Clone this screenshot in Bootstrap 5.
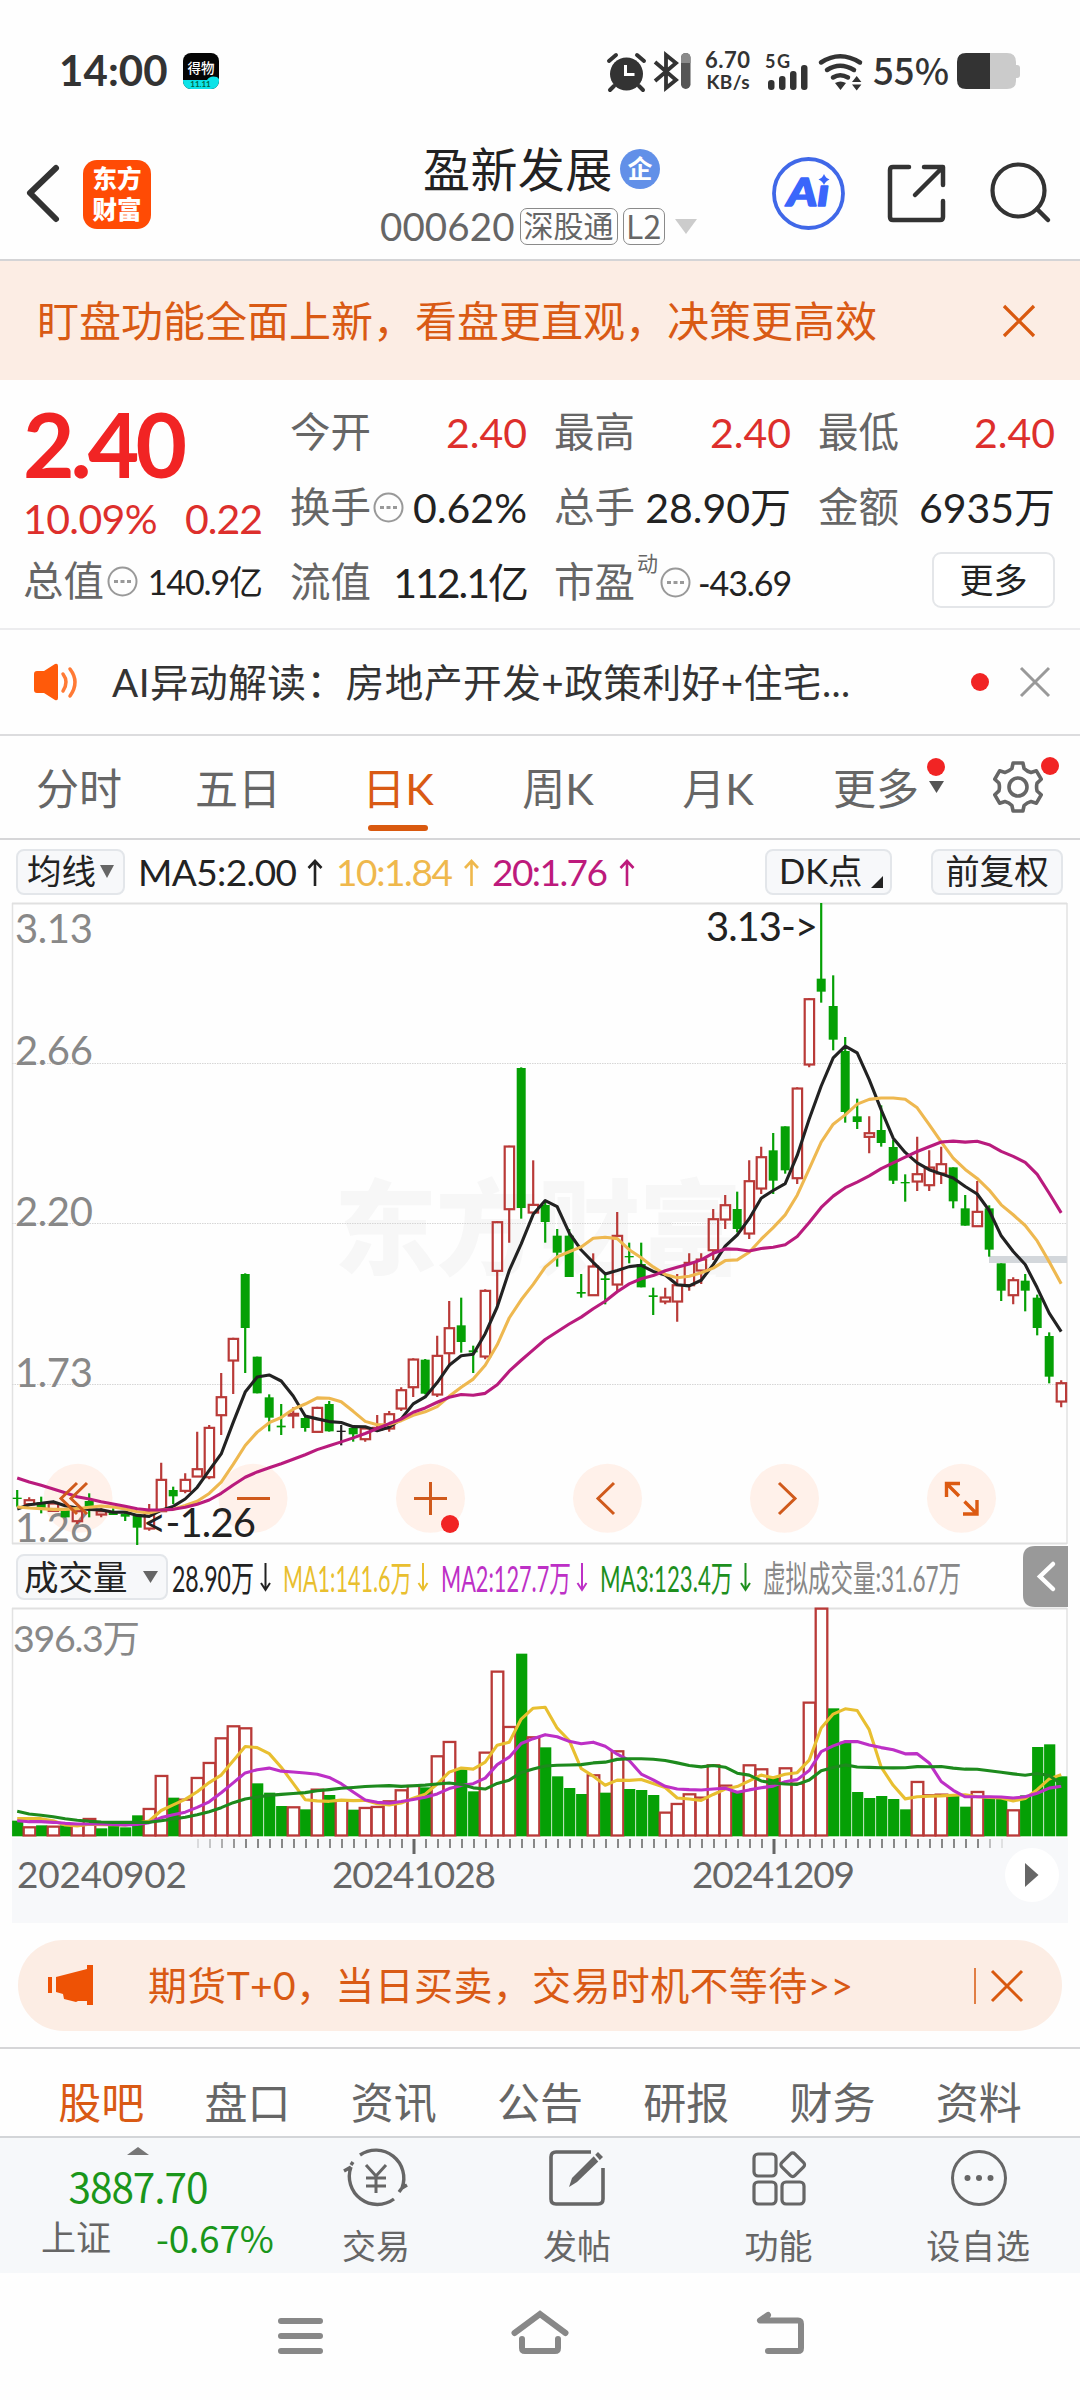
<!DOCTYPE html>
<html lang="zh-CN">
<head>
<meta charset="utf-8">
<meta name="viewport" content="width=device-width, initial-scale=1">
<title>盈新发展 000620</title>
<link href="https://cdn.jsdelivr.net/npm/bootstrap@5.3.0/dist/css/bootstrap.min.css" rel="stylesheet">
<style>
body{width:1080px;height:2400px;margin:0;background:#fefefe;color:#222;font-family:Lato,"Noto Sans CJK SC",sans-serif;line-height:1;overflow-x:hidden}
svg{display:block;flex:none;overflow:visible}
.nw,.nw *{white-space:nowrap}
.orange{color:#d95a14}.grey6{color:#666}.down{color:#1a961a}
.statusbar{height:142px;padding-left:59px}
.clock{font-size:42px;font-weight:700;color:#333;width:124px;letter-spacing:.1px;margin-top:-2px}
.apphead{height:119px;border-bottom:2px solid #d4d4d6}
.brand{width:68px;height:69px;border-radius:14px;background:#ff4b05;color:#fff;font-size:24.5px;font-weight:900;line-height:31px;padding-top:3px;text-align:center}
.stockname{font-size:47px;color:#222;letter-spacing:.4px}
.code{font-size:38.5px;color:#666;letter-spacing:.1px}
.tagbox{height:37px;border:1.5px solid #8a8a8a;border-radius:7px;color:#666;font-size:30px;line-height:32px;padding:0 3px}
.notice{height:119px;background:#fcede4;font-size:42px;padding-left:37px}
.quote{height:250px;border-bottom:2px solid #ececee;padding-left:23px}
.bigprice{font-size:89px;font-weight:700;color:#f12424;letter-spacing:-4px;line-height:100px;height:100px}
.cell{height:75px}
.lab{font-size:40.5px;color:#666}
.num{font-size:41px;color:#222}
.numsm{font-size:34px;color:#222}
.up{color:#dd2f2c}
.morebtn{width:123px;height:56px;border:2px solid #e4e6e9;border-radius:9px;font-size:34px;background:#fff}
.airow{height:106px;border-bottom:2px solid #dcdcde;padding-left:33px;font-size:38.7px;color:#333}
.tabs{height:104px;border-bottom:2px solid #d6d6d8;font-size:43px;color:#666}
.tabs>div{height:102px;position:relative;padding-top:3px}
.tabline{position:absolute;width:60px;height:6px;border-radius:3px;background:#d9590f;bottom:7px;left:50%;margin-left:-30px}
.dot{width:18px;height:18px;border-radius:50%;background:#f12424}
.corner{position:absolute}
.tools{height:63px;padding-left:16px;font-size:37px}
.chip{background:#f7f8fa;border:2px solid #e3e6ea;border-radius:8px;height:46px;font-size:34.5px;color:#222}
.promo{margin:17px 18px 16px;height:91px;border-radius:46px;background:#fcede4;font-size:39px}
.sections{height:91px;border-top:2px solid #d6d6d8;border-bottom:2px solid #d3d5d8;font-size:43px;color:#666;padding:19px 28px 0}
.bottombar{height:135px;background:#f6f8fa;color:#666;font-size:34px}
.idx{width:276px}
.idx .pt{font-family:"Noto Sans CJK SC",sans-serif}
.navbar3{height:126px}
</style>
</head>
<body class="nw">
<header class="statusbar d-flex align-items-center">
  <div class="clock">14:00</div>
  <svg width="36" height="36" viewBox="0 0 36 36"><defs><clipPath id="ic"><rect width="36" height="36" rx="8"/></clipPath></defs><g clip-path="url(#ic)"><rect width="36" height="36" fill="#050505"/><path d="M0 27H24Q27 22 34 24L36 26V36H0Z" fill="#0de3e8"/></g><text x="18" y="20" font-size="13.5" font-weight="500" fill="#fff" text-anchor="middle">得物</text><text x="17.500" y="34" font-size="8" font-weight="700" fill="#064" text-anchor="middle">11.11</text></svg>
  <svg class="ms-auto" width="480" height="50" viewBox="600 46 480 50" fill="#333">
    <circle cx="626.500" cy="74" r="16.500"/><path d="M614 86l-4 4M639 86l4 4M609 61l7-6M644 61l-7-6" stroke="#333" stroke-width="4" stroke-linecap="round"/><path d="M625.500 65v9.500h9" fill="none" stroke="#fff" stroke-width="3"/>
    <path d="M655 62l21 18-10 8V55l10 8-21 18" fill="none" stroke="#333" stroke-width="3.800"/>
    <rect x="681" y="53" width="9.500" height="36" rx="4.700" fill="#555"/><path d="M681 63V57.700a4.700 4.700 0 0 1 9.500 0V63Z" fill="#8a8a8a"/>
    <text x="705" y="68" font-size="22" font-weight="700" textLength="45">6.70</text><text x="706.500" y="89" font-size="19" font-weight="700" textLength="43">KB/s</text>
    <text x="765" y="67.500" font-size="18" font-weight="700" textLength="25">5G</text>
    <rect x="768" y="80" width="6.500" height="10" rx="3"/><rect x="779" y="76" width="6.500" height="14" rx="3"/><rect x="790" y="71" width="6.500" height="19" rx="3"/><rect x="801" y="65" width="6.500" height="25" rx="3"/>
    <g fill="none" stroke="#333" stroke-width="4.500" stroke-linecap="round"><path d="M821 62.500Q840 50 860 62.500"/><path d="M827 70Q840 61.500 854 70"/><path d="M833 77.500Q840 73 848 77.500"/></g>
    <path d="M835 83Q840.500 80 846 83L840.500 90ZM852 82l4.700-6 4.700 6ZM852 84.500l4.700 6 4.700-6Z"/>
    <text x="873" y="84.500" font-size="37" font-weight="500" font-family="Noto Sans CJK SC" textLength="76" lengthAdjust="spacingAndGlyphs">55%</text>
    <path d="M990 53h17q9 0 9 9v3h1q3 0 3 3v7q0 3-3 3h-1v3q0 8-9 8h-17z" fill="#cbcbcb"/><path d="M990 53H966q-9 0-9 9v18q0 9 9 9H990z"/>
  </svg>
</header>
<section class="apphead d-flex">
  <svg style="margin:21px 0 0 24px" width="38" height="60" viewBox="0 0 38 60"><path d="M32 5L6 30L32 56" fill="none" stroke="#333" stroke-width="6" stroke-linecap="round" stroke-linejoin="round"/></svg>
  <div class="brand" style="margin:18px 0 0 21px">东方<br>财富</div>
  <div style="margin-left:229px;width:322px">
    <div class="d-flex align-items-center" style="margin:2px 0 0 43px;height:50px"><span class="stockname">盈新发展</span>
      <svg style="margin-left:7px" width="40" height="40" viewBox="0 0 40 40"><circle cx="20" cy="20" r="20" fill="#6290e8"/><text x="20" y="29" font-size="25" font-weight="700" fill="#fff" text-anchor="middle">企</text></svg></div>
    <div class="d-flex align-items-center" style="margin-top:14px;height:37px"><span class="code">000620</span><span class="tagbox" style="margin-left:5px">深股通</span><span class="tagbox text-center" style="margin-left:5px;padding:0;width:42px"><span style="font-size:32px;font-family:'Noto Sans CJK SC'">L2</span></span>
      <svg style="margin:0 0 0 10px" width="22" height="15"><path d="M0 0H22L11 15Z" fill="#ccc"/></svg></div>
  </div>
  <svg class="ms-auto" width="316" height="100" viewBox="764 142 316 100" fill="none" stroke="#333" stroke-width="5" stroke-linecap="round" stroke-linejoin="round">
    <circle cx="808.500" cy="193.500" r="34.500" stroke="#4068e8" stroke-width="3.800"/>
    <text x="787" y="206" font-size="38" font-weight="900" font-style="italic" fill="#3a66fb" stroke="#3a66fb" stroke-width="1.500" textLength="42" lengthAdjust="spacingAndGlyphs">Aı</text><path d="M824 174q1.500 4 5.500 5.500q-4 1.500-5.500 5.500q-1.500-4-5.500-5.500q4-1.500 5.500-5.500Z" fill="#3a66fb" stroke="none"/>
    <path d="M909 167H893q-3 0-3 3V217q0 3 3 3H940q3 0 3-3V201M924 167H943V185M942 168L915 195" stroke-width="4.500"/>
    <circle cx="1018.500" cy="190.500" r="26" stroke-width="4.200"/><path d="M1037 209L1048 220" stroke-width="4.500"/>
  </svg>
</section>
<section class="notice orange d-flex align-items-center"><span>盯盘功能全面上新，看盘更直观，决策更高效</span>
  <svg class="ms-auto" style="margin-right:44px" width="34" height="34"><path d="M2 2L32 32M32 2L2 32" stroke="#d9590f" stroke-width="3.300"/></svg></section>

<section class="quote d-flex">
  <div style="width:239px">
    <div class="bigprice" style="margin-top:14px">2.40</div>
    <div class="up d-flex justify-content-between" style="font-size:41px;margin-top:4px;height:38px"><span style="letter-spacing:-.6px">10.09%</span><span style="letter-spacing:-1px">0.22</span></div>
    <div class="cell d-flex align-items-center" style="margin-top:8px"><span class="lab" style="margin-right:3px">总值</span><svg width="31" height="31" viewBox="0 0 31 31"><circle cx="15.500" cy="15.500" r="14" fill="none" stroke="#999" stroke-width="2"/><path d="M7 15.500h4M13.500 15.500h4M20 15.500h4" stroke="#999" stroke-width="3"/></svg><span class="numsm ms-auto" style="letter-spacing:-1.1px">140.9亿</span></div>
  </div>
  <div style="margin:15px 0 0 28px;width:237px">
    <div class="cell d-flex align-items-center justify-content-between"><span class="lab">今开</span><span class="num up">2.40</span></div>
    <div class="cell d-flex align-items-center"><span class="lab" style="margin-right:2px">换手</span><svg width="31" height="31" viewBox="0 0 31 31"><circle cx="15.500" cy="15.500" r="14" fill="none" stroke="#999" stroke-width="2"/><path d="M7 15.500h4M13.500 15.500h4M20 15.500h4" stroke="#999" stroke-width="3"/></svg><span class="num ms-auto">0.62%</span></div>
    <div class="cell d-flex align-items-center justify-content-between"><span class="lab">流值</span><span class="num" style="letter-spacing:-2px">112.1亿</span></div>
  </div>
  <div style="margin:15px 0 0 27px;width:237px">
    <div class="cell d-flex align-items-center justify-content-between"><span class="lab">最高</span><span class="num up">2.40</span></div>
    <div class="cell d-flex align-items-center justify-content-between"><span class="lab">总手</span><span class="num">28.90万</span></div>
    <div class="cell d-flex align-items-center"><span class="lab">市盈</span><span class="grey6 align-self-start" style="font-size:21px;margin:7px 2px 0 2px">动</span><svg width="31" height="31" viewBox="0 0 31 31"><circle cx="15.500" cy="15.500" r="14" fill="none" stroke="#999" stroke-width="2"/><path d="M7 15.500h4M13.500 15.500h4M20 15.500h4" stroke="#999" stroke-width="3"/></svg><span class="numsm ms-auto" style="letter-spacing:-1.1px">-43.69</span></div>
  </div>
  <div style="margin:15px 0 0 27px;width:237px">
    <div class="cell d-flex align-items-center justify-content-between"><span class="lab">最低</span><span class="num up">2.40</span></div>
    <div class="cell d-flex align-items-center justify-content-between"><span class="lab">金额</span><span class="num">6935万</span></div>
    <div class="cell d-flex align-items-center justify-content-end" style="margin-top:-3px"><span class="morebtn d-flex align-items-center justify-content-center">更多</span></div>
  </div>
</section>

<section class="airow d-flex align-items-center">
  <svg width="46" height="36" viewBox="0 0 46 36"><path d="M1 10q0-3 3-3H11L22 0q3-1 3 2V34q0 3-3 2L11 29H4q-3 0-3-3Z" fill="#ff5a0a"/><path d="M30 10q6 8 0 17M37 5q10 13 0 27" fill="none" stroke="#ff7a35" stroke-width="3.500" stroke-linecap="round"/></svg>
  <span style="margin-left:33px;letter-spacing:.45px">AI异动解读：房地产开发+政策利好+住宅...</span>
  <span class="dot ms-auto"></span>
  <svg style="margin:0 30px 0 31px" width="30" height="30"><path d="M1 1L29 29M29 1L1 29" stroke="#999" stroke-width="3"/></svg>
</section>

<nav class="tabs d-flex">
  <div class="d-flex align-items-center justify-content-center" style="width:158px">分时</div>
  <div class="d-flex align-items-center justify-content-center" style="width:160px">五日</div>
  <div class="d-flex align-items-center justify-content-center orange" style="width:160px">日K<span class="tabline"></span></div>
  <div class="d-flex align-items-center justify-content-center" style="width:160px">周K</div>
  <div class="d-flex align-items-center justify-content-center" style="width:160px">月K</div>
  <div class="d-flex align-items-center" style="width:191px;padding-left:35px">更多<svg style="margin:-3px 0 0 10px" width="16" height="12"><path d="M0 0H15L7.500 12Z" fill="#555"/></svg><span class="dot corner" style="left:129px;top:22px"></span></div>
  <div class="d-flex align-items-center" style="width:91px;padding:0 0 0 3px"><svg width="52" height="52" viewBox="-26 -26 52 52" fill="none" stroke="#666" stroke-width="3.600" stroke-linejoin="round"><path id="gear"/><circle r="9"/></svg><span class="dot corner" style="left:52px;top:21px"></span></div>
</nav>

<section class="tools d-flex align-items-center">
  <span class="chip d-flex align-items-center" style="width:109px;padding-left:9px">均线<svg style="margin-left:4px" width="14" height="13"><path d="M0 0H14L7 13Z" fill="#666"/></svg></span>
  <svg width="520" height="46" viewBox="125 848 520 46" font-size="37"><g fill="#222"><text x="138" y="885" textLength="159">MA5:2.00</text></g><text x="336" y="885" fill="#efb84c" textLength="117">10:1.84</text><text x="492" y="885" fill="#bd1a7c" textLength="116">20:1.76</text>
    <g fill="none" stroke-width="2.600"><path d="M315 885V860M308.500 867L315 860L321.500 867" stroke="#222"/><path d="M471.500 885V860M465 867L471.500 860L478 867" stroke="#efb84c"/><path d="M627 885V860M620.500 867L627 860L633.500 867" stroke="#bd1a7c"/></g></svg>
  <span class="chip d-flex align-items-center ms-auto" style="width:127px;padding-left:12px">DK点<svg style="margin:20px 0 0 8px" width="12" height="12"><path d="M12 0V12H0Z" fill="#222"/></svg></span>
  <span class="chip d-flex align-items-center justify-content-center" style="width:132px;margin:0 17px 0 39px">前复权</span>
</section>

<svg id="kline" width="1080" height="642" viewBox="0 903 1080 642"></svg>

<section class="d-flex align-items-center" style="height:63px;padding:1px 0 0 16px">
  <span class="chip d-flex align-items-center" style="width:152px;padding-left:6px">成交量<svg style="margin-left:15px" width="15" height="12"><path d="M0 0H15L7.500 12Z" fill="#666"/></svg></span>
  <svg width="855" height="62" viewBox="168 1546 855 62" font-size="36">
    <text x="172" y="1592" textLength="82" lengthAdjust="spacingAndGlyphs" fill="#222">28.90万</text><text x="283" y="1592" textLength="129" lengthAdjust="spacingAndGlyphs" fill="#e9bf2f">MA1:141.6万</text><text x="441" y="1592" textLength="130" lengthAdjust="spacingAndGlyphs" fill="#bd30c6">MA2:127.7万</text><text x="600" y="1592" textLength="133" lengthAdjust="spacingAndGlyphs" fill="#1d8f1d">MA3:123.4万</text><text x="763" y="1592" textLength="198" lengthAdjust="spacingAndGlyphs" fill="#888">虚拟成交量:31.67万</text>
    <g fill="none" stroke-width="2"><path d="M265.500 1563V1590M261 1583L265.500 1590L270 1583" stroke="#222"/><path d="M423 1563V1590M418.500 1583L423 1590L427.500 1583" stroke="#e9bf2f"/><path d="M582 1563V1590M577.500 1583L582 1590L586.500 1583" stroke="#bd30c6"/><path d="M745.500 1563V1590M741 1583L745.500 1590L750 1583" stroke="#1d8f1d"/></g></svg>
  <svg width="45" height="62" viewBox="0 0 45 62"><path d="M45 0H12Q0 0 0 12V49Q0 61 12 61H45Z" fill="#999"/><path d="M30 18L17 30.500L30 43" fill="none" stroke="#fff" stroke-width="4.500" stroke-linecap="round"/></svg>
</section>

<svg id="volume" width="1080" height="315" viewBox="0 1608 1080 315"></svg>

<section class="promo orange d-flex align-items-center">
  <svg style="margin-left:29px" width="47" height="42" viewBox="0 0 47 42" fill="#ee5205"><rect x="1" y="12" width="4" height="16"/><path d="M9 12L40 4V0H46V40H40V36H31L29 37L17 34L16 29L9 27Z"/></svg>
  <span style="margin-left:54px;letter-spacing:.35px">期货T+0，当日买卖，交易时机不等待&gt;&gt;</span>
  <svg class="ms-auto" style="margin-right:37px" width="52" height="38"><path d="M2 1V37" stroke="#d9590f" stroke-width="1.500"/><path d="M19 4L49 34M49 4L19 34" stroke="#d9590f" stroke-width="3"/></svg>
</section>
<nav class="sections d-flex align-items-center text-center"><span class="col orange">股吧</span><span class="col">盘口</span><span class="col">资讯</span><span class="col">公告</span><span class="col">研报</span><span class="col">财务</span><span class="col">资料</span></nav>
<section class="bottombar d-flex">
  <div class="idx">
    <svg style="margin:9px auto 0" width="22" height="8"><path d="M0 8L11 0L22 8Z" fill="#777"/></svg>
    <div class="down text-center pt" style="font-size:40.5px;letter-spacing:-1px;margin-top:9px;height:44px;line-height:44px">3887.70</div>
    <div class="d-flex align-items-center" style="margin:7px 0 0 41px;height:44px"><span style="width:115px;font-size:35px">上证</span><span class="down pt" style="font-size:37px;letter-spacing:-.2px">-0.67%</span></div>
  </div>
  <div class="d-flex flex-column align-items-center" style="width:200px"><svg style="margin-top:10px" width="66" height="60" viewBox="-33 -30 66 60" fill="none" stroke="#666" stroke-width="3.400"><path d="M-16 -23A28 28 0 0 1 26 10M26 10L31 7M26 10L23 14M18 21A28 28 0 0 1 -25 -11M-25 -11L-32 -7M-25 -13L-23 -16"/><path d="M-10 -13L0 -2L10 -13M0 -2V15M-10 0H10M-10 8H10" stroke-width="3"/></svg><span style="margin-top:21px">交易</span></div>
  <div class="d-flex flex-column align-items-center" style="width:202px"><svg style="margin-top:10px" width="60" height="60" viewBox="0 0 60 60" fill="none" stroke="#666" stroke-width="3.600"><path d="M44 4H9Q4 4 4 9V51Q4 56 9 56H51Q56 56 56 51V20"/><path d="M22 39L25 30L51 4L56 9L30 34Z" fill="#666" stroke="none"/><path d="M47 7L53 14" stroke="#f6f8fa" stroke-width="2"/></svg><span style="margin-top:21px">发帖</span></div>
  <div class="d-flex flex-column align-items-center" style="width:201px"><svg style="margin-top:10px" width="60" height="60" viewBox="0 0 60 60" fill="none" stroke="#666" stroke-width="3.200"><rect x="5" y="6" width="22" height="22" rx="4"/><rect x="5" y="34" width="22" height="22" rx="4"/><rect x="33" y="34" width="22" height="22" rx="4"/><rect x="34.500" y="7.500" width="18.500" height="18.500" rx="3" transform="rotate(45 43.700 16.700)"/></svg><span style="margin-top:21px">功能</span></div>
  <div class="d-flex flex-column align-items-center" style="width:199px"><svg style="margin-top:10px" width="60" height="60" viewBox="0 0 60 60"><circle cx="30" cy="30" r="26.500" fill="none" stroke="#666" stroke-width="3"/><g fill="#666"><circle cx="18.500" cy="30" r="3"/><circle cx="30" cy="30" r="3"/><circle cx="41.500" cy="30" r="3"/></g></svg><span style="margin-top:21px;letter-spacing:.8px">设自选</span></div>
</section>
<nav class="navbar3 d-flex">
  <svg width="1080" height="126" viewBox="0 2274 1080 126" fill="none" stroke="#888" stroke-width="6" stroke-linecap="round" stroke-linejoin="round"><path d="M281 2322H320M281 2337H320M281 2352H320"/><path d="M514.500 2334L540 2315L565.500 2334" stroke-linejoin="miter"/><path d="M522 2340V2349Q522 2352 525 2352H555Q558 2352 558 2349V2340"/><path d="M768 2316L760 2321.500H798Q801 2321.500 801 2325V2349Q801 2352 798 2352H768"/></svg>
</nav>

<script src="https://cdn.jsdelivr.net/npm/bootstrap@5.3.0/dist/js/bootstrap.bundle.min.js"></script>
<script>
const RED='#b93a38',GREEN='#05a005',X0=17.2,STEP=12;
const cx=i=>X0+STEP*i, f=n=>n.toFixed(2);
/* colour, body top, body bottom, high, low; unit is a third of a pixel below y=1200 */
const low=`g893,897,870,920 r900,912,892,915 g907,927,890,940 r910,932,908,934 g930,952,925,952 r933,963,930,972 g903,920,880,952 r933,943,925,952 g938,945,925,945 g941,950,935,963 g947,983,945,1035 r935,985,912,992 r839,933,788,935 g870,889,860,912 r839,872,820,880 r807,829,695,830 r683,831,675,838 r591,645,519,705 r416,481,413,582 g222,384,220,519 g470,580,470,580 g592,653,583,694 g677,682,612,705 r641,646,622,685 g654,684,650,695 r623,695,620,697 g612,694,603,695 k692,696,675,736 g684,703,680,725 r685,717,680,725 r683,688,645,692 r642,685,633,695 r570,625,562,633 r478,561,475,591 g479,581,477,583 r467,583,407,591 r384,459,303,500 g376,426,293,458 g451,457,437,519 r272,469,268,478 r66,212,64,320 r-161,27,-163,128 g-396,24,-398,56 r14,37,-119,37 g15,66,3,128 g107,158,87,200 g107,231,87,231 g276,281,222,293 r199,285,160,285 g235,240,225,313 r107,253,36,275 g168,172,128,190 g192,262,128,262 g286,291,263,345 r292,304,263,313 r255,304,222,365 r188,255,160,272 r178,211,160,252 r57,150,27,180 r15,58,-15,87 g27,87,-25,97 r-57,100,-119,117`;
/* same unit, measured below y=890 */
const peak=`r801,895,770,912 g781,872,729,912 g709,841,709,851 r595,864,592,882 r327,523,325,532 g266,305,39,338 g348,449,256,481 g483,666,441,698 g679,696,626,717 r729,740,679,790 g720,759,646,770 g771,872,750,882 g876,880,853,935 r852,874,740,903 r832,885,781,903 r822,850,770,882 g832,934,832,955 g955,1007,915,1007 r965,1008,873,1008`;
const tail=`g25,149,16,170 g190,272,190,303 r240,285,232,313 g242,272,222,334 g293,384,284,406 g408,530,397,550 r549,604,541,622`;
const parse=(s,o)=>s.trim().split(/\s+/).map(t=>[t[0],...t.slice(1).split(',').map(v=>o+v/3)]);
const candles=[...parse(low,1200),...parse(peak,890),...parse(tail,1200)];
const close=candles.map(c=>c[0]=='r'?c[1]:c[2]);
function ma(series,n,head){return series.map((_,i)=>i<head.length?head[i]:series.slice(i-n+1,i+1).reduce((a,b)=>a+b)/n)}
const line=(p,c)=>`<polyline points="${p.map((y,i)=>f(cx(i))+','+f(y)).join(' ')}" fill="none" stroke="${c}" stroke-width="3.1" stroke-linejoin="round"/>`;
const at=(o,a)=>a.map(v=>o+v/3);
let s=`<g fill="#f7f7f7"><text x="334" y="1267" font-size="103" font-weight="900" textLength="408">东方财富</text></g>`;
s+=`<path d="M12.500 903V1544M1067 903V1544" stroke="#e2e2e2" stroke-width="1.500"/><path d="M12 903.500H1067M12 1543.500H1067" stroke="#e0e0e0" stroke-width="2"/>`;
for(const y of [1063.5,1223.5,1384.5]) s+=`<path d="M12 ${y}H1067" stroke="#d6d6d6" stroke-width="1" stroke-dasharray="1.500 1"/>`;
for(const x of [78,253,430.500,607.500,784.500,961.500]) s+=`<circle cx="${x}" cy="1498.300" r="34.500" fill="#fff1ea"/>`;
[['3.13',942.5],['2.66',1065],['2.20',1225.500],['1.73',1386.500],['1.26',1542]].forEach(([t,y],i)=>s+=`<text x="15" y="${y}" font-size="40" fill="#888" letter-spacing="-.4">${t}</text>`);
s+='<rect x="989" y="1256" width="78" height="7" fill="#d3d7db"/>';
candles.forEach(([k,t,b,h,l],i)=>{const x=cx(i);
  if(k=='r'){s+=`<path d="M${x} ${h}V${t}M${x} ${b}V${l}" stroke="${RED}" stroke-width="2.2"/><rect x="${x-4.5}" y="${t+.2}" width="9.400" height="${b-t}" fill="${b-t<3?RED:'none'}" stroke="${RED}" stroke-width="2.200"/>`}
  else{const c=k=='k'?'#222':GREEN;s+=`<path d="M${x} ${h}V${l}" stroke="${c}" stroke-width="2.2"/><rect x="${x-4.5}" y="${t}" width="9" height="${b-t}" fill="${c}"/>`}});
s+=line(ma(close,5,at(1200,[927,914,910,905])),'#222');
s+=line(ma(close,10,at(1200,[921,924,926,928,928,926,922,918,921])),'#eeb850');
s+=line(ma(close,20,at(1200,[834,846,856,867,878,890,897,905,912,919,926,930,930,928,922,913,900,880,855])),'#b91b7d');
s+=`<text x="706" y="940.500" font-size="40" fill="#222" textLength="112">3.13-&gt;</text><text x="143" y="1537" font-size="40" fill="#222" textLength="113">&lt;-1.26</text>`;
s+=`<g fill="none" stroke="#d05a1c" stroke-width="3"><path d="M77 1483L61 1498.500L77 1514M87 1483L71 1498.500L87 1514M237 1498.500H270M414 1498.500H447M430.500 1482V1515M614 1483L598 1498.500L614 1514M779 1483L795 1498.500L779 1514"/><path d="M946.500 1497V1483.500H960M946.500 1483.500L959 1496M963 1514H977V1500M977 1514L964.500 1501.500" stroke-width="3.400" stroke="#dc5a12"/></g><circle cx="450" cy="1524" r="9" fill="#f12424"/>`;
document.getElementById('kline').innerHTML=s;

const vols=`g842 r861 g856 r859 g856 r856 r836 g865 g856 g862 g826 r806 r707 g773 r778 r713 r668 r594 r558 r564 g730 g758 g798 r801 g808 r748 g765 r780 g809 r803 r800 r783 r750 r737 g742 r648 r605 g688 g754 r637 r394 r560 g341 r591 g622 g709 g744 g762 r705 g758 r633 g747 g750 g765 r817 r791 r762 r772 r675 r736 g754 r675 r687 g714 r684 r730 r487 r205 g505 g605 g756 g774 g768 g777 g808 r725 r765 r763 g768 g800 r755 g774 g774 r810 g766 g621 g613 g709`.split(' ').map(t=>[t[0],1540+t.slice(1)/3]);
s=`<rect x="12" y="1838" width="1056" height="85" fill="#f7f8fa"/><path d="M12.500 1608V1836M1067 1608V1836" stroke="#e2e2e2" stroke-width="1.500"/><path d="M12 1608.500H1067" stroke="#e0e0e0" stroke-width="2"/><text x="13" y="1652" font-size="37.500" fill="#888" textLength="127">396.3万</text>`;
vols.forEach(([k,y],i)=>{const x=cx(i);
  s+=k=='r'?`<rect x="${x-5.5}" y="${y+.3}" width="11.600" height="${1835.2-y}" fill="#fff" stroke="${RED}" stroke-width="2.300"/>`:`<rect x="${x-5.1}" y="${y}" width="11.200" height="${1836.3-y}" fill="${GREEN}"/>`});
const v=vols.map(a=>a[1]);
s+=line(ma(v,5,at(1540,[836,836,836,842])),'#e8bf30')+line(ma(v,10,at(1540,[842,845,845,847,850,852,852,852,853])),'#bd30c6')+line(ma(v,20,at(1540,[814,822,826,830,836,841,844,846,847,847,847,847,842,837,832,824,815,803,788])),'#1d8a1d');
for(let i=0;i<68;i++){const x=198+12*i,big=i==18||i==48,o=i<4?.25+.2*i:i>65?.5-.3*(i-66):1;
  if(x<1003)s+=`<path d="M${x} 1839V${big?1854:1848}" stroke="${big?'#666':'#888'}" stroke-width="${big?3:2}" opacity="${o}"/>`}
[['20240902',17,170],['20241028',332,164],['20241209',692,163]].forEach(([t,x,w])=>s+=`<text x="${x}" y="1888" font-size="37" fill="#666" textLength="${w}">${t}</text>`);
s+=`<circle cx="1032" cy="1875" r="27" fill="#fff"/><path d="M1025 1863V1887L1038.500 1875Z" fill="#666"/>`;
document.getElementById('volume').innerHTML=s;

let g='';const pt=(r,a)=>(r*Math.sin(a)).toFixed(1)+' '+(-r*Math.cos(a)).toFixed(1);
for(let k=0;k<6;k++){const a=k*Math.PI/3;g+=(k?'L':'M')+pt(24.5,a-.2)+'L'+pt(24.5,a+.2)+'L'+pt(19.5,a+.32)+'Q'+pt(18,a+.52)+' '+pt(19.5,a+.73)}
document.getElementById('gear').setAttribute('d',g+'Z');
</script>
</body>
</html>
